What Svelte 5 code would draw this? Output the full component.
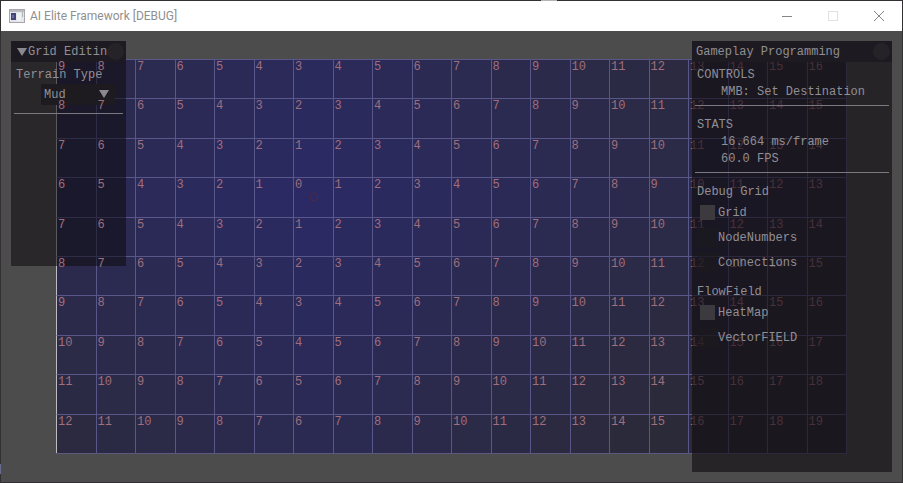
<script>
  const columns = 20;
  const rows = 10;
  const goal = { column: 6, row: 3 };

  const cells = Array.from({ length: columns * rows }, (_, i) => {
    const column = i % columns;
    const row = Math.floor(i / columns);
    const distance = Math.abs(column - goal.column) + Math.abs(row - goal.row);
    return { distance, heat: `rgb(43, 42, ${Math.max(54, 101 - distance * 3)})` };
  });

  let terrain = $state('Mud');
  let debugGrid = $state([
    { label: 'Grid', on: true },
    { label: 'NodeNumbers', on: false },
    { label: 'Connections', on: false }
  ]);
  let flowField = $state([
    { label: 'HeatMap', on: true },
    { label: 'VectorFIELD', on: false }
  ]);
</script>

{#snippet checks(items)}
  {#each items as item}
    <label class="check"><input type="checkbox" bind:checked={item.on} /><span>{item.label}</span></label>
  {/each}
{/snippet}

<div class="window">
  <header class="titlebar">
    <svg class="app-icon" width="16" height="14" viewBox="0 0 16 14" aria-hidden="true">
      <rect x="0.5" y="0.5" width="15" height="13" fill="#e4e6ea" stroke="#a9a5ab" />
      <rect x="1" y="1" width="14" height="2" fill="#b9bbc2" />
      <rect x="2" y="4" width="5" height="7" fill="#45457c" />
      <rect x="3" y="6" width="2" height="3" fill="#6a6a9c" />
      <rect x="8" y="4" width="4" height="8" fill="#edf2f4" />
      <rect x="13" y="3" width="1" height="5" fill="#aeb0b8" />
    </svg>
    <h1>AI Elite Framework [DEBUG]</h1>
    <div class="controls">
      <button aria-label="Minimize"><svg width="12" height="12" viewBox="0 0 12 12"><path d="M1 6.5H11" stroke="#858585" /></svg></button>
      <button aria-label="Maximize" disabled><svg width="12" height="12" viewBox="0 0 12 12"><rect x="1.5" y="1.5" width="9" height="9" fill="none" stroke="#dfe3e6" /></svg></button>
      <button aria-label="Close"><svg width="12" height="12" viewBox="0 0 12 12"><path d="M1 1L11 11M11 1L1 11" stroke="#858288" /></svg></button>
    </div>
  </header>

  <main>
    <div class="grid">
      {#each cells as cell}
        <div class="cell" style:background-color={cell.heat}>
          <span>{cell.distance}</span>
          {#if cell.distance === 0}
            <svg class="agent" width="10" height="10" viewBox="0 0 10 10" aria-hidden="true">
              <path d="M3.5 1.5H6.5L8.5 3.5V6.5L6.5 8.5H3.5L1.5 6.5V4.5H.5M1.5 4.5V3.5L3.5 1.5" fill="none" stroke="#52293c" />
            </svg>
          {/if}
        </div>
      {/each}
    </div>

    <section class="panel editing">
      <header>
        <svg width="10" height="8" viewBox="0 0 10 8" aria-hidden="true"><path d="M0 0H10L5 8Z" fill="#8b8990" /></svg>
        <h2>Grid Editing</h2>
        <button class="close" aria-label="Close Grid Editing"></button>
      </header>
      <label class="terrain-label" for="terrain">Terrain Type</label>
      <div class="combo">
        <select id="terrain" bind:value={terrain}>
          <option>Mud</option>
          <option>Water</option>
          <option>Ground</option>
        </select>
        <svg width="10" height="8" viewBox="0 0 10 8" aria-hidden="true"><path d="M0 0H10L5 8Z" fill="#8b8990" /></svg>
      </div>
      <hr />
    </section>

    <section class="panel gameplay">
      <header>
        <h2>Gameplay Programming</h2>
        <button class="close" aria-label="Close Gameplay Programming"></button>
      </header>
      <div class="group">
        <h3>CONTROLS</h3>
        <p>MMB: Set Destination</p>
      </div>
      <hr />
      <div class="group stats">
        <h3>STATS</h3>
        <p>16.664 ms/frame</p>
        <p>60.0 FPS</p>
      </div>
      <hr />
      <div class="group toggles">
        <h3>Debug Grid</h3>
        {@render checks(debugGrid)}
        <h3>FlowField</h3>
        {@render checks(flowField)}
      </div>
    </section>
  </main>
</div>

<style>
  :global(body) {
    margin: 0;
  }
  .window {
    box-sizing: border-box;
    min-height: 100vh;
    padding: 1px;
    display: flex;
    flex-direction: column;
    background:
      linear-gradient(#b4b2b6, #b4b2b6) 61% 0 / 16px 1px no-repeat,
      linear-gradient(#6b6a90, #6b6a90) 0 98% / 1px 10px no-repeat,
      #323033;
  }
  h1, h2, h3, p {
    margin: 0;
    font-weight: 400;
    font-size: inherit;
  }
  button {
    padding: 0;
    border: 0;
    background: none;
  }
  .titlebar {
    height: 30px;
    display: flex;
    align-items: center;
    background: #fff;
    color: #8f8f8f;
    font: 12px/16px Roboto, sans-serif;
  }
  .app-icon {
    margin: 0 5px 0 8px;
  }
  .controls {
    margin-left: auto;
    display: flex;
  }
  .controls button {
    width: 46px;
    height: 30px;
    display: grid;
    place-items: center;
  }
  main {
    position: relative;
    flex: 1;
    display: flex;
    padding: 28px 55px;
    background: #4c4c4c;
    font: 12px/15px "Liberation Mono", monospace;
  }
  .grid {
    flex: 1;
    display: grid;
    grid-template-columns: repeat(20, 1fr);
    grid-template-rows: repeat(10, 1fr);
    border: solid #5b5980;
    border-width: 0 1px 1px 0;
  }
  .cell {
    display: grid;
    grid-template: 1fr / 1fr;
    border: solid #59578a;
    border-width: 1px 0 0 1px;
    padding-left: 1px;
    color: #a06e7c;
  }
  .cell:nth-child(20n + 1) {
    border-left-color: #bdbbbf;
  }
  .cell > * {
    grid-area: 1 / 1;
  }
  .cell span {
    z-index: 2;
    justify-self: start;
    align-self: start;
  }
  .agent {
    place-self: center;
  }
  .panel {
    position: absolute;
    top: 10px;
    display: flex;
    flex-direction: column;
    color: #918f95;
  }
  .panel header {
    height: 21px;
    display: flex;
    align-items: center;
    gap: 1px;
    padding: 0 2px 0 4px;
    background: #1d1b21;
  }
  .panel h2 {
    flex: 1;
    min-width: 0;
    margin-right: -2px;
    padding-top: 2px;
    white-space: nowrap;
    overflow: hidden;
  }
  .close {
    flex: none;
    width: 17px;
    height: 17px;
    border-radius: 50%;
    background: #252328;
  }
  hr {
    box-sizing: border-box;
    height: 1px;
    margin: 0 3px;
    border: 0;
    background: #7b797f;
  }
  .editing {
    z-index: 1;
    left: 10px;
    width: 115px;
    height: 225px;
    background: rgba(12, 9, 12, 0.55);
  }
  .editing header {
    padding-left: 6px;
  }
  .terrain-label {
    margin: 6px 5px 1px;
  }
  .combo {
    position: relative;
    margin: 0 11px 8px 30px;
  }
  .combo select {
    display: block;
    width: 100%;
    height: 21px;
    padding: 2px 3px 0;
    border: 0;
    border-radius: 0;
    appearance: none;
    background: #1d1b20;
    color: inherit;
    font: inherit;
  }
  .combo svg {
    position: absolute;
    right: 6px;
    top: 6px;
    pointer-events: none;
  }
  .gameplay {
    z-index: 3;
    right: 10px;
    bottom: 10px;
    width: 200px;
    background: rgba(16, 12, 16, 0.62);
  }
  .group {
    display: flex;
    flex-direction: column;
    gap: 2px;
    padding: 6px 5px;
    white-space: nowrap;
  }
  .group:not(.toggles) {
    padding-bottom: 5px;
  }
  .stats {
    padding-top: 12px;
  }
  .group p {
    padding-left: 24px;
  }
  .toggles {
    padding-top: 12px;
    gap: 4px;
  }
  .toggles h3 {
    margin-bottom: -2px;
  }
  .check {
    display: flex;
    align-items: center;
    height: 21px;
  }
  .check span {
    padding-top: 2px;
  }
  .check + h3 {
    margin-top: 8px;
  }
  .check input {
    box-sizing: border-box;
    width: 21px;
    height: 21px;
    margin: 0;
    padding: 3px;
    appearance: none;
    background: rgba(29, 27, 30, 0.6);
  }
  .check input:checked {
    background: #3c3a3f content-box;
    background-clip: content-box;
  }
</style>
